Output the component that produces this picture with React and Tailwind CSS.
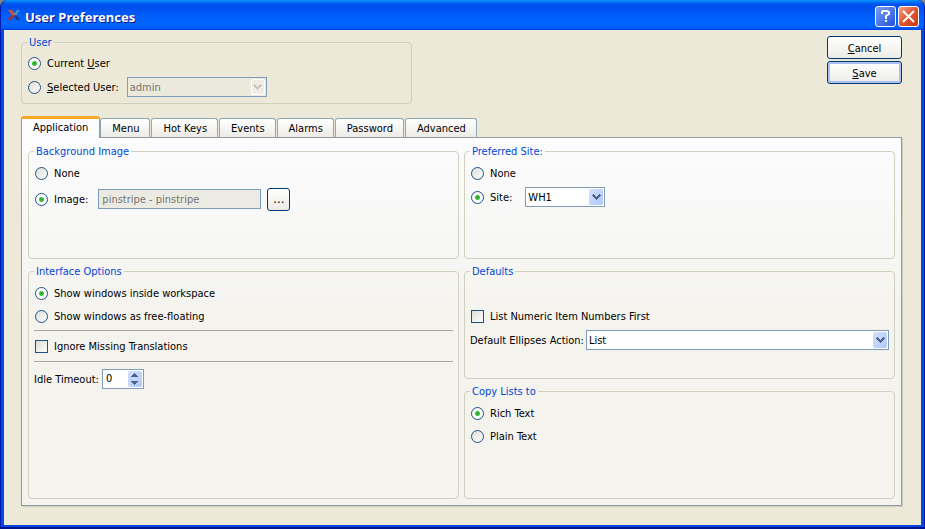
import React, { useState } from 'react';

const tabs = ['Application', 'Menu', 'Hot Keys', 'Events', 'Alarms', 'Password', 'Advanced'];

function Group({ title, className = '', children }) {
  return (
    <fieldset className={`min-w-0 rounded-[4px] border border-[#d0d0bf] px-[5px] ${className}`}>
      <legend className="px-[2px] leading-[15px] text-[#0046d5]">{title}</legend>
      {children}
    </fieldset>
  );
}

function Radio({ name, value, current, onChange, children }) {
  return (
    <label className="flex items-center gap-[6px] whitespace-nowrap">
      <input
        type="radio"
        name={name}
        value={value}
        checked={current === value}
        onChange={() => onChange(value)}
        className="ml-px size-[13px] shrink-0 appearance-none rounded-full border border-[#21517f] bg-linear-to-br from-[#dcdcd7] to-white checked:bg-[radial-gradient(circle,#21a121_0px,#3cc43c_2px,#ffffff_3px)]"
      />
      <span className="pt-[2px]">{children}</span>
    </label>
  );
}

function Check({ checked, onChange, children }) {
  return (
    <label className="flex items-center gap-[6px] whitespace-nowrap">
      <input
        type="checkbox"
        checked={checked}
        onChange={(e) => onChange(e.target.checked)}
        className="ml-px size-[13px] shrink-0 appearance-none border border-[#1c5180] bg-linear-to-br from-[#dcdcd7] to-white checked:bg-[#21a121] checked:bg-none"
      />
      <span className="pt-[2px]">{children}</span>
    </label>
  );
}

function Select({ label, id, options, disabled, className = '' }) {
  return (
    <div className={`relative h-[20px] ${className}`}>
      <select
        id={id}
        aria-label={label}
        disabled={disabled}
        className="h-full w-full appearance-none border border-[#7f9db9] bg-white px-[2px] pt-[2px] leading-[16px] text-black disabled:bg-[#ebe9dc] disabled:text-[#77766c] disabled:opacity-100"
      >
        {options.map((o) => (
          <option key={o}>{o}</option>
        ))}
      </select>
      <span
        className={`pointer-events-none absolute top-[2px] right-[2px] flex h-[16px] w-[14px] items-center justify-center rounded-[2px] ${
          disabled ? 'border border-white bg-[#eeede5] text-[#c9c7ba]' : 'bg-linear-to-br from-[#d3e0fd] to-[#b0c8f8] text-[#4d6185]'
        }`}
      >
        <svg width="9" height="6" viewBox="0 0 9 6" className="shrink-0" shapeRendering="crispEdges" fill="currentColor">
          <path d="M0 1h1V0h1v1h1v1h1v1h1V2h1V1h1V0h1v1h1v1H8v1H7v1H6v1H5v1H4V5H3V4H2V3H1V2H0z" />
        </svg>
      </span>
    </div>
  );
}

export default function App() {
  const [activeTab, setActiveTab] = useState('Application');
  const [user, setUser] = useState('current');
  const [background, setBackground] = useState('image');
  const [site, setSite] = useState('site');
  const [windows, setWindows] = useState('inside');
  const [copyAs, setCopyAs] = useState('rich');
  const [ignoreMissing, setIgnoreMissing] = useState(false);
  const [numericFirst, setNumericFirst] = useState(false);
  const [timeout, setIdleTimeout] = useState(0);

  return (
    <div className="min-h-screen bg-[#8b8a80] font-['DejaVu_Sans_Condensed','DejaVu_Sans',sans-serif] text-[11px] leading-[14px] text-black">
      <div className="flex min-h-screen flex-col rounded-t-[7px] border-x border-b-2 border-x-[#0019b0] border-b-[#00138c] bg-[#0848e0]">
        {/* Title bar */}
        <header className="flex h-[30px] shrink-0 items-center rounded-t-[7px] bg-[linear-gradient(to_bottom,#0997ff_0px,#0053ee_4px,#0050ee_8px,#0060fe_17px,#0066ff_25px,#005bff_28px,#003dd7_30px)] pr-[5px] pl-[6px]">
          <svg width="14" height="14" viewBox="0 0 14 14">
            <path d="M1 2h4l4 5-2 1-2-1z" fill="#d8502c" />
            <path d="M5 7l3 1-4 4H0z" fill="#a83038" />
            <path d="M13 2h-3L7 6l2 2z" fill="#3a9ac8" />
            <path d="M9 7l4 5h-3L7 8z" fill="#23356f" />
          </svg>
          <h1 className="ml-[4px] flex-1 pt-[3px] font-['Noto_Sans',sans-serif] text-[13px] leading-[18px] font-bold text-white [text-shadow:1px_1px_#0f1089]">User Preferences</h1>
          <div className="flex gap-[2px] pt-[2px]">
            <button type="button" aria-label="Help" className="flex size-[21px] items-center justify-center rounded-[3px] border border-white bg-linear-to-br from-[#7a9df5] to-[#2350d8]">
              <svg width="11" height="14" viewBox="0 0 11 14" fill="none" stroke="#fff" strokeWidth="2">
                <path d="M2 5V3l1-1h4l2 1v2L6 7v3M5 12h2" />
              </svg>
            </button>
            <button type="button" aria-label="Close" className="flex size-[21px] items-center justify-center rounded-[3px] border border-white bg-linear-to-br from-[#f0a08c] via-[#e0532f] to-[#c33c14]">
              <svg width="13" height="13" viewBox="0 0 13 13" stroke="#fff" strokeWidth="2">
                <path d="M1 1l11 11M12 1L1 12" />
              </svg>
            </button>
          </div>
        </header>

        <main className="mx-[3px] mb-[2px] flex flex-1 flex-col bg-[#ece9d8] pt-[5px] pr-[19px] pb-[19px] pl-[17px]">
          <div className="flex items-start justify-between">
            <Group title="User" className="h-[69px] w-[391px]">
              <div className="flex flex-col gap-[4px] pt-[3px]">
                <div className="flex h-[20px] items-center">
                  <Radio name="user" value="current" current={user} onChange={setUser}>
                    Current <u>U</u>ser
                  </Radio>
                </div>
                <div className="flex h-[20px] items-center gap-[8px]">
                  <Radio name="user" value="selected" current={user} onChange={setUser}>
                    <u>S</u>elected User:
                  </Radio>
                  <Select label="Selected User" options={['admin']} disabled={user !== 'selected'} className="w-[140px]" />
                </div>
              </div>
            </Group>

            <div className="flex flex-col gap-[2px] pt-px">
              <button type="button" className="h-[23px] w-[75px] rounded-[3px] border border-[#003c74] bg-linear-to-b from-white to-[#ecebe6] pt-[2px]">
                <u>C</u>ancel
              </button>
              <button type="button" className="h-[23px] w-[75px] rounded-[3px] border border-[#003c74] bg-linear-to-b from-white to-[#ecebe6] pt-[2px] shadow-[inset_0_0_0_2px_#a9c0f0]">
                <u>S</u>ave
              </button>
            </div>
          </div>

          {/* Tabs */}
          <div role="tablist" className="relative -mb-px flex items-end pt-[12px]">
            {tabs.map((tab) => (
              <button
                key={tab}
                type="button"
                role="tab"
                aria-selected={tab === activeTab}
                onClick={() => setActiveTab(tab)}
                className={
                  tab === activeTab
                    ? 'h-[22px] rounded-t-[3px] border-x border-t-[3px] border-x-[#919b9c] border-t-[#f6a828] bg-[#fcfcfe] px-[11px] pb-[2px]'
                    : 'mr-px mb-px h-[19px] rounded-t-[3px] border border-b-0 border-[#91a7b4] bg-linear-to-b from-white to-[#ecebe6] pt-[2px] pr-[10px] pl-[11px]'
                }
              >
                {tab}
              </button>
            ))}
          </div>

          <div role="tabpanel" className="grid flex-1 grid-cols-2 grid-rows-3 gap-x-[5px] gap-y-[5px] border border-[#919b9c] bg-linear-to-b from-[#fcfcfe] to-[#f4f3ee] to-50% p-[6px] shadow-[1px_1px_#d0cebf]">
            <Group title="Background Image">
              <div className="flex flex-col gap-[4px] pt-[4px]">
                <div className="flex h-[20px] items-center">
                  <Radio name="background" value="none" current={background} onChange={setBackground}>None</Radio>
                </div>
                <div className="flex h-[24px] items-center">
                  <Radio name="background" value="image" current={background} onChange={setBackground}>Image:</Radio>
                  <input
                    type="text"
                    aria-label="Image file"
                    disabled
                    defaultValue="pinstripe - pinstripe"
                    className="ml-[10px] h-[20px] w-[163px] border border-[#7f9db9] bg-[#ebebe4] px-[3px] text-[#77766c]"
                  />
                  <button type="button" aria-label="Browse" className="ml-[6px] size-[23px] rounded-[3px] border border-[#003c74] bg-linear-to-b from-white to-[#ecebe6] text-[13px]">
                    ...
                  </button>
                </div>
              </div>
            </Group>

            <Group title="Preferred Site:">
              <div className="flex flex-col gap-[4px] pt-[4px]">
                <div className="flex h-[20px] items-center">
                  <Radio name="site" value="none" current={site} onChange={setSite}>None</Radio>
                </div>
                <div className="flex h-[20px] items-center gap-[13px]">
                  <Radio name="site" value="site" current={site} onChange={setSite}>Site:</Radio>
                  <Select label="Site" options={['WH1']} className="w-[80px]" />
                </div>
              </div>
            </Group>

            <Group title="Interface Options" className="row-span-2">
              <div className="flex flex-col gap-[3px] pt-[4px]">
                <div className="flex h-[20px] items-center">
                  <Radio name="windows" value="inside" current={windows} onChange={setWindows}>Show windows inside workspace</Radio>
                </div>
                <div className="flex h-[20px] items-center">
                  <Radio name="windows" value="free" current={windows} onChange={setWindows}>Show windows as free-floating</Radio>
                </div>
              </div>
              <div className="mt-[4px] flex h-[32px] items-center border-y border-[#aca899]">
                <Check checked={ignoreMissing} onChange={setIgnoreMissing}>Ignore Missing Translations</Check>
              </div>
              <div className="mt-[7px] flex h-[20px] items-center gap-[3px]">
                <label htmlFor="idle" className="pt-[2px]">Idle Timeout:</label>
                <div className="flex h-[20px] w-[42px] border border-[#7f9db9] bg-white p-px">
                  <input
                    id="idle"
                    type="text"
                    value={timeout}
                    onChange={(e) => setIdleTimeout(Number(e.target.value) || 0)}
                    className="w-0 flex-1 pl-[2px]"
                  />
                  <div className="flex w-[14px] flex-col rounded-[2px] bg-linear-to-br from-[#d3e0fd] to-[#b0c8f8] text-[#4d6185]">
                    <button type="button" aria-label="Increase" onClick={() => setIdleTimeout(timeout + 1)} className="flex flex-1 items-center justify-center">
                      <svg width="7" height="4" viewBox="0 0 7 4" fill="currentColor" shapeRendering="crispEdges">
                        <path d="M3 0h1v1h1v1h1v1h1v1H0V3h1V2h1V1h1z" />
                      </svg>
                    </button>
                    <button type="button" aria-label="Decrease" onClick={() => setIdleTimeout(Math.max(0, timeout - 1))} className="flex flex-1 items-center justify-center">
                      <svg width="7" height="4" viewBox="0 0 7 4" fill="currentColor" shapeRendering="crispEdges">
                        <path d="M0 0h7v1H6v1H5v1H4v1H3V3H2V2H1V1H0z" />
                      </svg>
                    </button>
                  </div>
                </div>
              </div>
            </Group>

            <Group title="Defaults">
              <div className="flex flex-col gap-[4px] pt-[27px]">
                <div className="flex h-[20px] items-center">
                  <Check checked={numericFirst} onChange={setNumericFirst}>List Numeric Item Numbers First</Check>
                </div>
                <div className="flex h-[20px] items-center gap-[2px]">
                  <label htmlFor="ellipses" className="pt-[2px] whitespace-nowrap">Default Ellipses Action:</label>
                  <Select id="ellipses" options={['List']} className="flex-1" />
                </div>
              </div>
            </Group>

            <Group title="Copy Lists to">
              <div className="flex flex-col gap-[3px] pt-[4px]">
                <div className="flex h-[20px] items-center">
                  <Radio name="copy" value="rich" current={copyAs} onChange={setCopyAs}>Rich Text</Radio>
                </div>
                <div className="flex h-[20px] items-center">
                  <Radio name="copy" value="plain" current={copyAs} onChange={setCopyAs}>Plain Text</Radio>
                </div>
              </div>
            </Group>
          </div>
        </main>
      </div>
    </div>
  );
}
